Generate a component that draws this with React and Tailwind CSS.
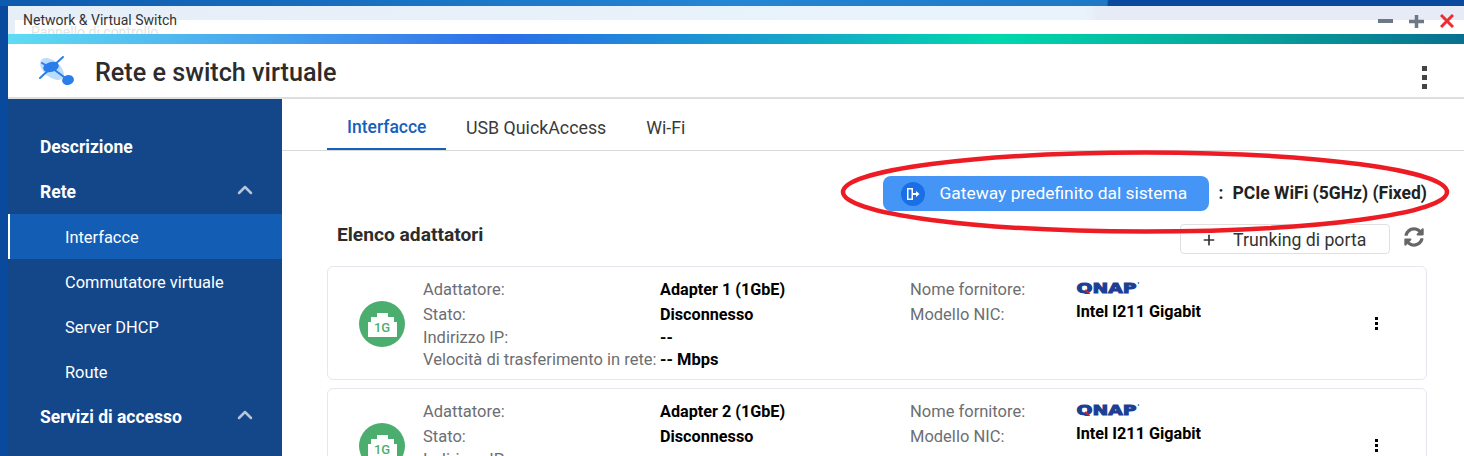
import { ChevronUp, Plus } from 'lucide-react';
import { FaSyncAlt } from 'react-icons/fa';

const subnav = ['Interfacce', 'Commutatore virtuale', 'Server DHCP', 'Route'];

const AppIcon = () => (
  <svg width="38" height="34" viewBox="0 0 38 34" fill="none">
    <ellipse cx="14" cy="15" rx="14" ry="8" fill="#bcdcfb" transform="rotate(40 14 15)" />
    <path d="M2 24L25 3M4 9L11 13M14 14L30 26" stroke="#2b7de9" strokeWidth="2" strokeLinecap="round" />
    <ellipse cx="13" cy="13" rx="8" ry="5" fill="#2b7de9" transform="rotate(-15 13 13)" />
    <ellipse cx="30" cy="26" rx="6" ry="5" fill="#2b7de9" transform="rotate(-15 30 26)" />
  </svg>
);

const PortIcon = () => (
  <div className="relative w-[46px] h-[46px] rounded-full bg-[#4cae6e] flex items-center justify-center">
    <svg width="29" height="24" viewBox="0 0 29 24" fill="#fff" className="mt-[1px]">
      <path d="M0 9h3V4h6V0h11v4h6v5h3v15H0z" />
    </svg>
    <span className="absolute left-0 right-0 top-[19px] text-center text-[13px] leading-[16px] font-medium text-[#4cae6e]">1G</span>
  </div>
);

const QnapLogo = () => (
  <svg width="64" height="13" viewBox="0 0 64 13">
    <text x="0.5" y="11.5" textLength="60" lengthAdjust="spacingAndGlyphs" fontFamily="DejaVu Sans" fontWeight="700" fontSize="14" fill="#1c3f94" stroke="#1c3f94" strokeWidth="1">QNAP</text>
    <path d="M9 9l4 3" stroke="#d8232a" strokeWidth="1.6" />
    <circle cx="62.5" cy="2" r="0.8" fill="#1c3f94" />
  </svg>
);

const AdapterCard = ({ n }) => (
  <div className="relative shrink-0 h-[114px] rounded-md border border-[#e4e7f0] bg-white mb-2">
    <div className="absolute left-[31px] top-[34px]"><PortIcon /></div>
    <div className="grid grid-cols-[237px_250px_166px_1fr] pl-[95px] pt-[10px] text-[16.5px] text-[#6d6e71]">
      <div className="leading-[25px] h-[25px]">Adattatore:</div>
      <div className="leading-[25px] h-[25px] text-[16.2px] font-bold text-black">Adapter {n} (1GbE)</div>
      <div className="leading-[25px] h-[25px]">Nome fornitore:</div>
      <div className="h-[25px] pt-[4px]"><QnapLogo /></div>
      <div className="leading-[25px] h-[25px]">Stato:</div>
      <div className="leading-[25px] h-[25px] text-[16.2px] font-bold text-black">Disconnesso</div>
      <div className="leading-[25px] h-[25px]">Modello NIC:</div>
      <div className="leading-[19px] h-[25px] text-[16.2px] font-bold text-black w-[125px] overflow-hidden whitespace-nowrap">Intel I211 Gigabit Ethernet</div>
      <div className="leading-[22px] h-[22px]">Indirizzo IP:</div>
      <div className="leading-[22px] h-[22px] text-[16.2px] font-bold text-black col-span-3">--</div>
      <div className="leading-[22px] h-[22px] whitespace-nowrap">Velocità di trasferimento in rete:</div>
      <div className="leading-[22px] h-[22px] text-[16.5px] font-bold text-black col-span-3">-- Mbps</div>
    </div>
    <div className="absolute right-[48px] top-[50px] flex flex-col gap-[2px]">
      <i className="block w-[3px] h-[3px] bg-black" />
      <i className="block w-[3px] h-[3px] bg-black" />
      <i className="block w-[3px] h-[3px] bg-black" />
    </div>
  </div>
);

export default function App() {
  return (
    <div className="relative w-[1464px] h-[456px] overflow-hidden bg-[#0a4a9e] font-['Roboto',sans-serif] pt-[6px] pl-[8px]">
      {/* Desktop strip above the window */}
      <div className="absolute left-0 right-0 top-0 h-[6px] bg-[linear-gradient(95deg,#0d5aae_0%,#2486d4_50%,#1e78c6_75.6%,#0a4a9e_75.7%,#0a4a9e_100%)]" />
      <div className="flex flex-col h-[450px] bg-white">
        {/* Title bar */}
        <div className="relative h-[28px] shrink-0 bg-[linear-gradient(90deg,#e6eef8_0%,#e9f3fb_60%,#e9f3fb_74%,#e6ebf6_75%)]">
          <div className="absolute left-[7px] right-0 top-[14px] h-[14px] bg-white overflow-hidden">
            <span className="absolute left-[16px] top-[5px] text-[14px] leading-[14px] text-[#e4e4e4]">Pannello di controllo</span>
          </div>
          <span className="absolute left-[15px] top-[6px] text-[14px] leading-[16px] text-[#333]">Network &amp; Virtual Switch</span>
          <div className="absolute right-[10px] top-[8px] flex items-center gap-[16px]">
            <i className="block w-[15px] h-[4px] bg-[#6d7785]" />
            <svg width="15" height="13" viewBox="0 0 15 13" className="text-[#6d7785]">
              <path d="M0 6.5H15M7.5 0V13" stroke="currentColor" strokeWidth="3.5" />
            </svg>
            <svg width="14" height="14" viewBox="0 0 14 14" className="text-[#ee2e2e]">
              <path d="M1 1L13 13M13 1L1 13" stroke="currentColor" strokeWidth="3" />
            </svg>
          </div>
        </div>
        <div className="h-[10px] shrink-0 bg-[linear-gradient(90deg,#5fdcf3_0%,#3a86ea_27%,#2a6fe8_34%,#14a8c8_55%,#00d8ac_68%,#07a39b_85%,#087090_100%)]" />
        {/* Header */}
        <div className="h-[55px] shrink-0 flex items-center border-b-2 border-[#dfdfdf] pl-[30px] pr-[37px]">
          <AppIcon />
          <span className="ml-[19px] mt-[5px] text-[25.2px] font-medium text-[#2c2c2c]">Rete e switch virtuale</span>
          <div className="ml-auto mt-[14px] flex flex-col gap-[4px]">
            <i className="block w-[5px] h-[5px] bg-[#444]" />
            <i className="block w-[5px] h-[5px] bg-[#444]" />
            <i className="block w-[5px] h-[5px] bg-[#444]" />
          </div>
        </div>
        <div className="flex flex-1 min-h-0">
          {/* Sidebar */}
          <aside className="w-[274px] shrink-0 bg-[#14478a] pt-[25px] text-white">
            <div className="h-[45px] flex items-center pt-[2px] pl-[32px] text-[17.5px] font-bold">Descrizione</div>
            <div className="h-[45px] flex items-center justify-between pt-[2px] pl-[32px] pr-[25px] text-[17.5px] font-bold">
              Rete
              <ChevronUp size={24} strokeWidth={2.5} className="text-[#b5c5da] -mt-[5px]" />
            </div>
            {subnav.map((item, i) => (
              <div key={item} className={i === 0
                ? 'h-[45px] flex items-center pt-[3px] pl-[55px] text-[16.4px] bg-[#145db5] border-l-2 border-white'
                : 'h-[45px] flex items-center pt-[3px] pl-[57px] text-[16.4px]'}>
                {item}
              </div>
            ))}
            <div className="h-[45px] flex items-center justify-between pt-[2px] pl-[32px] pr-[25px] text-[17.5px] font-bold">
              Servizi di accesso
              <ChevronUp size={24} strokeWidth={2.5} className="text-[#b5c5da] -mt-[5px]" />
            </div>
          </aside>
          {/* Main */}
          <main className="flex-1 min-w-0 flex flex-col">
            <div className="h-[52px] shrink-0 flex border-b border-[#d9d9d9] pl-[45px] text-[17.8px] text-[#3a3a3a]">
              <div className="h-[51px] w-[119px] pl-[20px] pt-[7px] flex items-center text-[17.5px] font-medium text-[#1560bd] border-b-2 border-[#1560bd]">Interfacce</div>
              <div className="h-[51px] px-[20px] pt-[7px] flex items-center">USB QuickAccess</div>
              <div className="h-[51px] px-[20px] pt-[7px] flex items-center">Wi-Fi</div>
            </div>
            <div className="flex-1 min-h-0 pl-[45px] pr-[37px] overflow-hidden">
              <div className="flex items-center justify-end mt-[25px] h-[35px]">
                <div className="w-[326px] h-[35px] rounded-lg bg-[#4495f5] flex items-center pl-[18px] text-white text-[17.4px]">
                  <div className="w-[24px] h-[24px] rounded-full bg-[#1a6fe6] flex items-center justify-center mr-[15px]">
                    <svg width="16" height="14" viewBox="0 0 16 14" fill="#fff">
                      <path d="M2 1h6v12H2zM3.5 2.5v9h3v-9z" fillRule="evenodd" />
                      <path d="M8 6h3V4l3.5 3L11 10V8H8z" />
                    </svg>
                  </div>
                  <span className="-mt-[1px]">Gateway predefinito dal sistema</span>
                </div>
                <span className="ml-[10px] mr-[9px] -mt-[1px] text-[17.5px] font-bold text-[#222]">:</span>
                <span className="-mt-[1px] text-[17.5px] font-bold text-[#222] whitespace-nowrap">PCIe WiFi (5GHz) (Fixed)</span>
              </div>
              <div className="flex items-start h-[42px] mt-[13px]">
                <span className="ml-[10px] text-[19.2px] font-bold text-[#2c2c2c] leading-[24px] -mt-[1px]">Elenco adattatori</span>
                <div className="ml-auto w-[210px] h-[30px] rounded border border-[#e0e0e0] flex items-center pt-[2px] pl-[20px] text-[17.7px] text-[#333]">
                  <Plus size={16} strokeWidth={2.5} className="text-[#333] mr-[16px]" />
                  Trunking di porta
                </div>
                <FaSyncAlt size={20} className="text-[#666] ml-[14px] mt-[3px] mr-[3px]" />
              </div>
              <AdapterCard n={1} />
              <AdapterCard n={2} />
            </div>
          </main>
        </div>
      </div>
      {/* Red hand-drawn highlight */}
      <svg className="absolute left-[838px] top-[147px] pointer-events-none" width="616" height="90" viewBox="0 0 616 90" fill="none">
        <ellipse cx="307" cy="45" rx="302" ry="39.5" stroke="#ed1c24" strokeWidth="4.5" />
      </svg>
    </div>
  );
}
